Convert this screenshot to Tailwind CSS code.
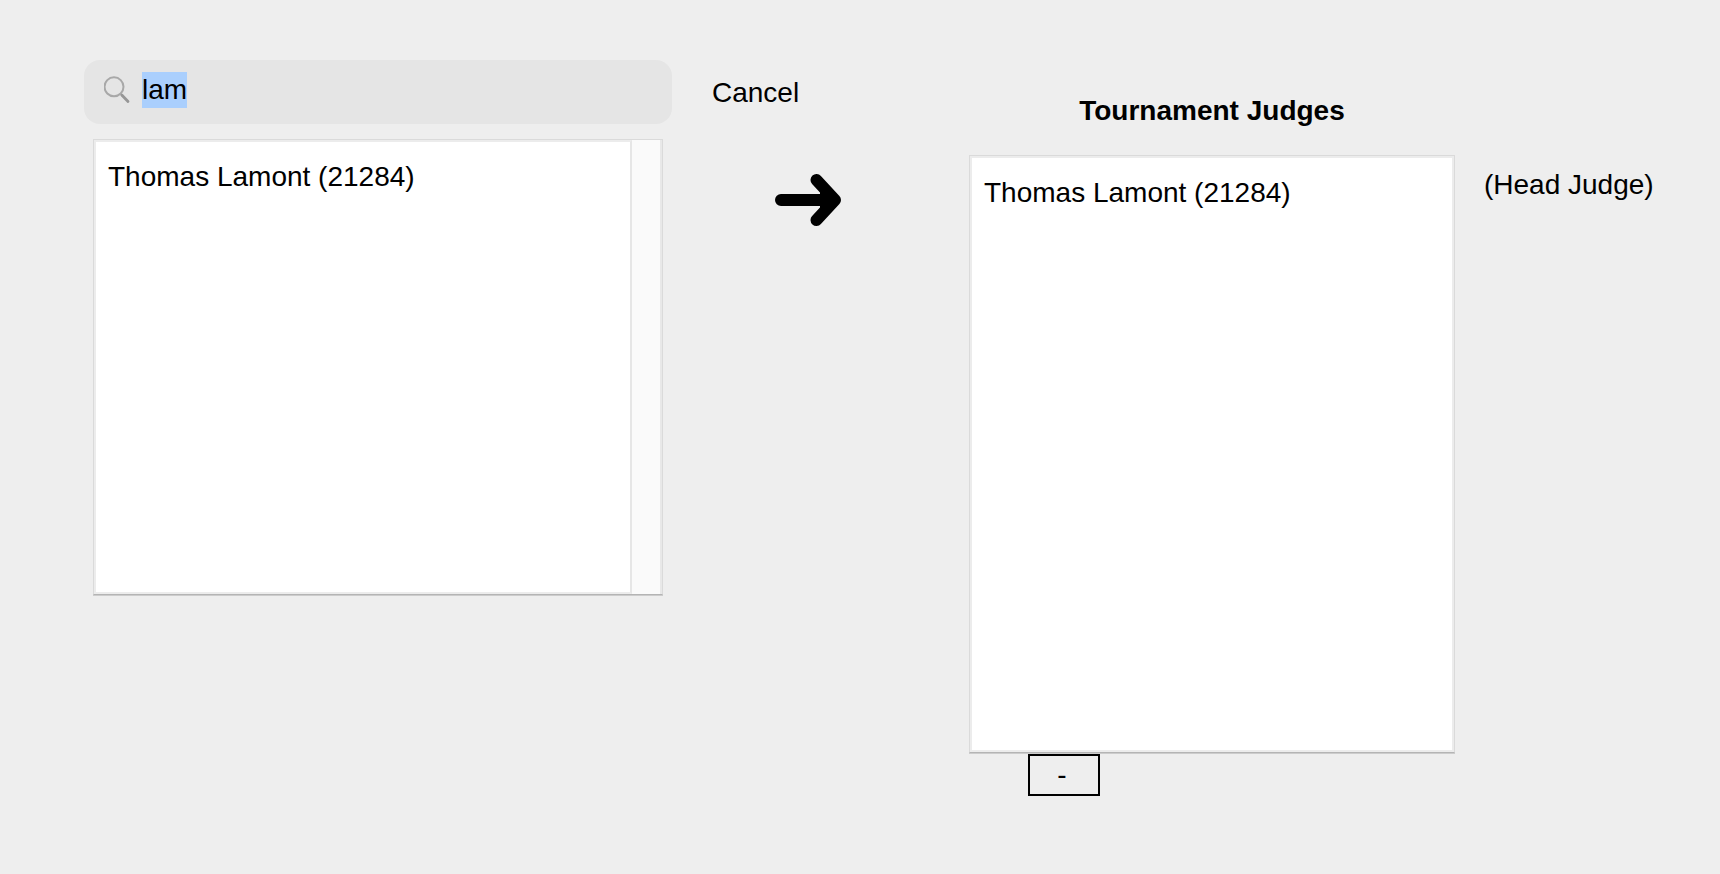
<!DOCTYPE html>
<html lang="en">
<head>
<meta charset="utf-8">
<meta name="viewport" content="width=device-width, initial-scale=1">
<title>Tournament Judges</title>
<script src="https://cdn.jsdelivr.net/npm/@tailwindcss/browser@4"></script>
</head>
<body class="min-h-screen bg-[#eeeeee] font-['Liberation_Sans',Arial,sans-serif] text-[28px] leading-9 text-black">
<main class="flex items-start pt-15 pr-16 pb-15 pl-21">
  <section class="min-w-0 flex-[588]">
    <label class="flex h-16 items-center rounded-2xl bg-[#e5e5e5] pr-4 pb-1 pl-5">
      <svg class="h-7 w-7 shrink-0" viewBox="0 0 28 28" fill="none" stroke="#a8a8a8" aria-hidden="true">
        <circle cx="10" cy="10.800" r="9.500" stroke-width="2"/>
        <path d="M16.500 17.800 18.500 19.800" stroke-width="2.200"/>
        <path d="M18 19.300 24 25.500" stroke="#969696" stroke-width="2.800" stroke-linecap="round"/>
      </svg>
      <input id="search" type="text" value="lam" autofocus aria-label="Search judges" class="ml-2.5 h-9 w-full min-w-0 bg-transparent leading-9 caret-transparent outline-none selection:bg-[#a9cefd]/99 selection:text-black">
    </label>
    <div class="mx-[9px] mt-[15px] flex h-[456px] border border-[#dadada] border-b-[#b4b4b4] bg-[#fafafa] shadow-[0_1px_0_#cccccc]">
      <select size="8" aria-label="Search results" class="min-w-0 flex-1 appearance-none overflow-hidden rounded-none border-2 border-[#ececec] border-r-[#e6e6e6] bg-white px-3 pt-[19px] outline-none">
        <option class="min-h-9 p-0 leading-9">Thomas Lamont (21284)</option>
      </select>
      <div class="w-[30px] border-r-2 border-[#e8e8e8]"></div>
    </div>
  </section>
  <div class="ml-10 w-[257px] shrink-0 pt-[15px]">
    <button type="button" class="block h-9">Cancel</button>
    <button type="button" aria-label="Add judge" class="mt-[63px] ml-[63px] block">
      <svg class="h-[52px] w-[66px]" viewBox="0 0 66 52" fill="none" stroke="#000" stroke-width="12" stroke-linecap="round" stroke-linejoin="round" aria-hidden="true">
        <path d="M6 26H60M41.500 6 60 26 41.500 46"/>
        <path fill="#000" stroke="none" d="M45 17 60 26 45 35Z"/>
      </svg>
    </button>
  </div>
  <section class="min-w-0 flex-[486] pt-[33px]">
    <h2 class="mb-[26px] text-center font-bold">Tournament Judges</h2>
    <div class="mb-px flex h-[598px] border border-[#dadada] border-b-[#b4b4b4] shadow-[0_1px_0_#cccccc]">
      <select size="12" aria-label="Tournament Judges" class="min-w-0 flex-1 appearance-none overflow-hidden rounded-none border-2 border-[#ececec] bg-white px-3 pt-[19px] outline-none">
        <option class="min-h-9 p-0 leading-9">Thomas Lamont (21284)</option>
      </select>
    </div>
    <button type="button" aria-label="Remove judge" class="ml-[59px] block h-[42px] w-[72px] border-2 border-black pr-1">-</button>
  </section>
  <p class="ml-[29px] w-[172px] shrink-0 pt-[107px] whitespace-nowrap">(Head Judge)</p>
</main>
<script>
  const search = document.getElementById('search');
  search.focus();
  search.select();
</script>
</body>
</html>
